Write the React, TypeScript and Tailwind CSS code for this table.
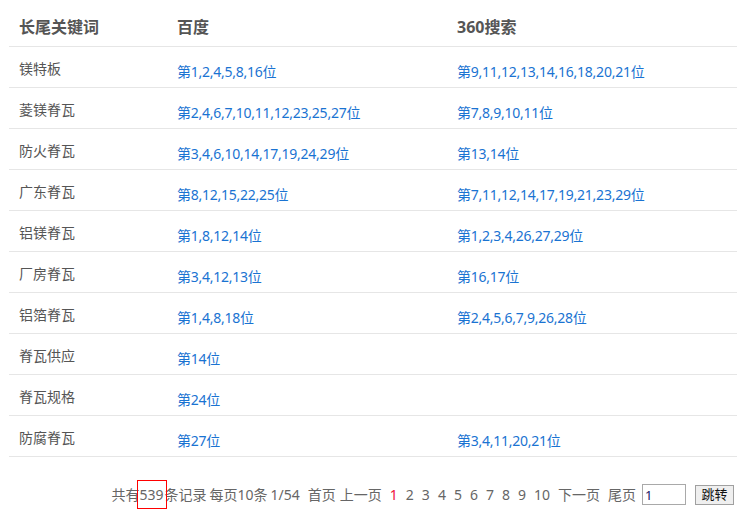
const rows = [
  { kw: "镁特板", baidu: "第1,2,4,5,8,16位", so: "第9,11,12,13,14,16,18,20,21位" },
  { kw: "菱镁脊瓦", baidu: "第2,4,6,7,10,11,12,23,25,27位", so: "第7,8,9,10,11位" },
  { kw: "防火脊瓦", baidu: "第3,4,6,10,14,17,19,24,29位", so: "第13,14位" },
  { kw: "广东脊瓦", baidu: "第8,12,15,22,25位", so: "第7,11,12,14,17,19,21,23,29位" },
  { kw: "铝镁脊瓦", baidu: "第1,8,12,14位", so: "第1,2,3,4,26,27,29位" },
  { kw: "厂房脊瓦", baidu: "第3,4,12,13位", so: "第16,17位" },
  { kw: "铝箔脊瓦", baidu: "第1,4,8,18位", so: "第2,4,5,6,7,9,26,28位" },
  { kw: "脊瓦供应", baidu: "第14位", so: "" },
  { kw: "脊瓦规格", baidu: "第24位", so: "" },
  { kw: "防腐脊瓦", baidu: "第27位", so: "第3,4,11,20,21位" },
];

export default function App() {
  return (
    <div className="w-[743px] h-[512px] bg-white font-['Noto_Sans','Noto_Sans_CJK_SC',sans-serif] overflow-hidden">
      <div className="ml-[9px] w-[728px]">
        {/* header */}
        <div className="flex h-[47px] border-b border-[#e6e6e6] text-[16px] font-bold text-[#555] pt-[15px] leading-6">
          <div className="w-[158px] pl-[10px]">长尾关键词</div>
          <div className="w-[280px] pl-[10px]">百度</div>
          <div className="flex-1 pl-[10px]">360搜索</div>
        </div>
        {rows.map((r) => (
          <div key={r.kw} className="flex h-[41px] border-b border-[#e6e6e6] text-[14px] leading-5">
            <div className="w-[158px] pl-[10px] pt-[12px] text-[#555]">{r.kw}</div>
            <div className="w-[280px] pl-[10px] pt-[15px] text-[#1a73d2] tracking-[-0.25px]">{r.baidu}</div>
            <div className="flex-1 pl-[10px] pt-[15px] text-[#1a73d2] tracking-[-0.25px]">{r.so}</div>
          </div>
        ))}
      </div>
      {/* pagination */}
      <div className="flex justify-end items-center pr-[9px] mt-[27px] text-[14px] text-[#666] leading-5">
        <span>共有</span>
        <span className="relative">
          539
          <span className="absolute -left-[3px] -right-[3px] -top-[5px] -bottom-[4px] border border-[#f00]"></span>
        </span>
        <span className="ml-[1px]">条记录</span>
        <span className="ml-[3px]">每页10条</span>
        <span className="ml-[3px]">1/54</span>
        <span className="ml-[8px]">首页</span>
        <span className="ml-[4px]">上一页</span>
        <span className="ml-[8px] text-[#f0103c]">1</span>
        {["2", "3", "4", "5", "6", "7", "8", "9", "10"].map((n) => (
          <span key={n} className="ml-[8px]">{n}</span>
        ))}
        <span className="ml-[8px]">下一页</span>
        <span className="ml-[8px]">尾页</span>
        <input
          defaultValue="1"
          className="ml-[6px] w-[44px] h-[21px] border border-[#a9a9a9] px-[2px] text-[13px] text-[#1b1464] outline-none"
        />
        <button className="ml-[9px] w-[39px] h-[20px] border border-[#a0a0a0] bg-[#efefef] text-[13px] font-normal text-[#111] leading-none">
          跳转
        </button>
      </div>
    </div>
  );
}
